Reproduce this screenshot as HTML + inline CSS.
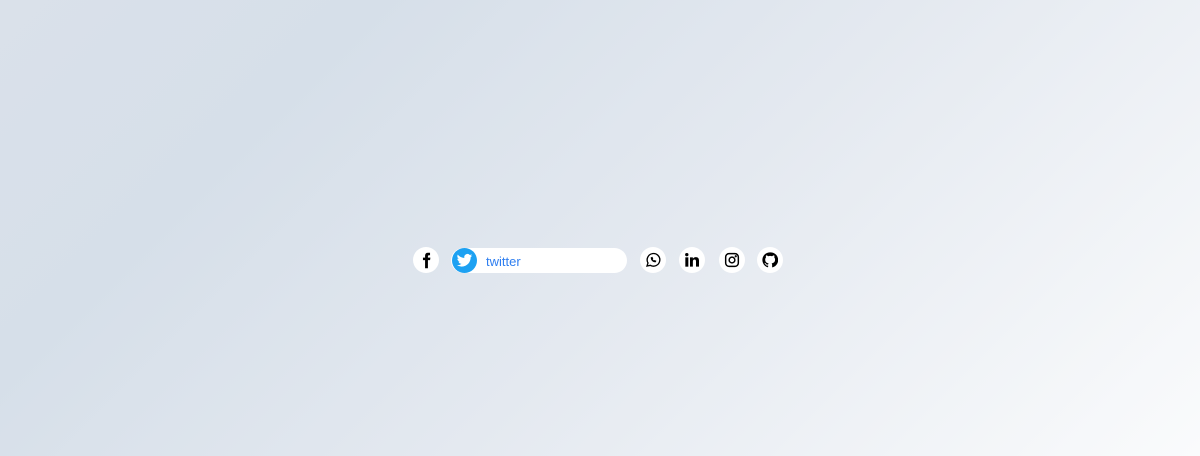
<!DOCTYPE html>
<html><head><style>
html,body{margin:0;width:1200px;height:456px;overflow:hidden}
body{background:linear-gradient(135deg,#dae1ea 0%,#d6dfe9 23%,#e4e9f0 55%,#fafbfc 100%);font-family:"Liberation Sans",sans-serif;position:relative}
.c{position:absolute;top:247px;width:26px;height:26px;border-radius:50%;background:#fff;display:flex;align-items:center;justify-content:center}
.pill{position:absolute;left:451px;top:248px;width:176px;height:25px;border-radius:13px;background:#fff}
.tb{position:absolute;left:1px;top:0;width:25px;height:25px;border-radius:50%;background:#1da1f2;display:flex;align-items:center;justify-content:center}
.pill span{position:absolute;left:35px;top:6px;font-size:13px;color:#2f7ff0}
</style></head><body>
<div class="c" style="left:413px"><svg width="17" height="17" viewBox="0 0 24 24"><path d="M14 8V6c0-1 .5-1.5 1.5-1.5H17V1h-3c-3 0-4 2-4 4.5V8H7v3.5h3V23h4V11.5h3l.5-3.5z" fill="#000"/></svg></div>
<div class="pill"><div class="tb"><svg width="17" height="17" viewBox="0 0 24 24"><path d="M23 5c-.8.4-1.7.6-2.6.7.9-.6 1.6-1.4 2-2.5-.9.5-1.9.9-2.900 1.1A4.5 4.5 0 0 0 11.8 8.4 12.8 12.8 0 0 1 2.5 3.7a4.5 4.5 0 0 0 1.4 6c-.7 0-1.4-.2-2-.6 0 2.2 1.6 4 3.6 4.4-.7.2-1.4.2-2 .1.6 1.800 2.2 3.1 4.2 3.1A9 9 0 0 1 1 18.6 12.8 12.8 0 0 0 7.9 20.6c8.3 0 12.8-6.9 12.8-12.8v-.6C21.6 6.6 22.4 5.9 23 5z" fill="#fff"/></svg></div><span>twitter</span></div>
<div class="c" style="left:640px"><svg width="16" height="16" viewBox="0 0 24 24" fill="none" stroke="#000" stroke-width="2"><path d="M3 21l1.5-4.5A9.5 9.5 0 1 1 8 20z"/><path d="M9 8.5c0 3.5 3 6.5 6.5 6.5l1-1.5-2-1-1 .8c-1-.5-2-1.5-2.5-2.5l.8-1-1-2z" fill="#000" stroke-width="1"/></svg></div>
<div class="c" style="left:679px"><svg width="16" height="16" viewBox="0 0 24 24" fill="#000"><rect x="2" y="8" width="4.5" height="14"/><circle cx="4.2" cy="4" r="2.5"/><path d="M9 8h4.3v2c.8-1.4 2.4-2.4 4.5-2.4 3.5 0 4.7 2.2 4.7 5.6V22H18v-7.6c0-1.8-.4-3.2-2.2-3.2s-2.5 1.3-2.5 3.2V22H9z"/></svg></div>
<div class="c" style="left:719px"><svg width="16" height="16" viewBox="0 0 24 24" fill="none" stroke="#000" stroke-width="2.2"><rect x="2.5" y="2.5" width="19" height="19" rx="5"/><circle cx="12" cy="12" r="4.3"/><circle cx="17.6" cy="6.4" r=".6" fill="#000"/></svg></div>
<div class="c" style="left:757px"><svg width="16" height="16" viewBox="0 0 24 24"><path fill="#000" d="M12 .5a11.5 11.5 0 0 0-3.6 22.4c.6.1.8-.3.8-.6v-2c-3.2.7-3.9-1.5-3.9-1.5-.5-1.3-1.3-1.7-1.3-1.7-1-.7.1-.7.1-.7 1.2.1 1.800 1.2 1.8 1.2 1 1.8 2.7 1.3 3.4 1 .1-.8.4-1.3.7-1.6-2.600-.3-5.2-1.3-5.2-5.7 0-1.3.5-2.3 1.2-3.100-.1-.3-.5-1.5.1-3.1 0 0 1-.3 3.2 1.2a11 11 0 0 1 5.8 0c2.2-1.5 3.2-1.2 3.2-1.2.6 1.6.2 2.8.1 3.1.7.8 1.2 1.8 1.2 3.1 0 4.4-2.7 5.4-5.2 5.7.4.4.8 1.1.8 2.2v3.2c0 .3.2.7.8.6A11.5 11.5 0 0 0 12 .5z"/></svg></div>
</body></html>
